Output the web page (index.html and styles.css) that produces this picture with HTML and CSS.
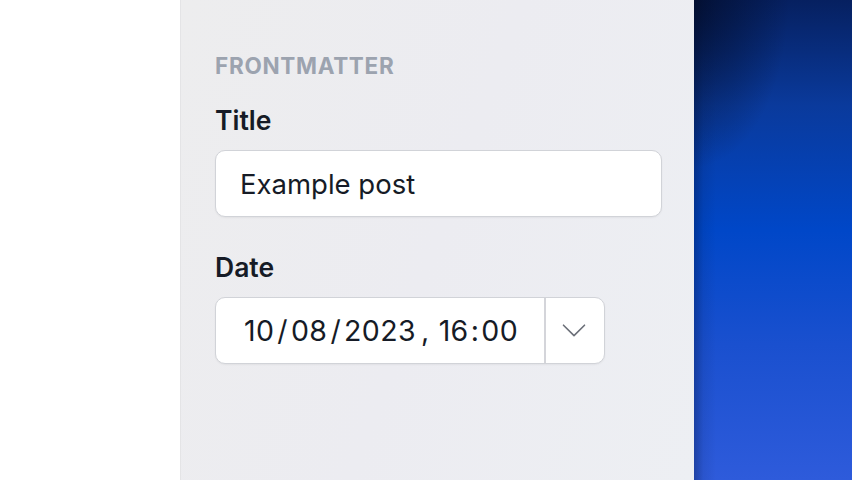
FILE: index.html
```html
<!DOCTYPE html>
<html>
<head>
<meta charset="utf-8">
<link rel="stylesheet" href="styles.css">
</head>
<body>
<div class="app">
  <div class="left"></div>
  <div class="panel">
    <div class="section-title">FRONTMATTER</div>
    <div class="field">
      <label class="label">Title</label>
      <div class="input">Example post</div>
    </div>
    <div class="field">
      <label class="label">Date</label>
      <div class="date">
        <div class="date-value">10<span class="sep">/</span>08<span class="sep">/</span>2023<span class="sep comma">,</span>16<span class="sep colon">:</span>00</div>
        <div class="date-btn">
          <svg width="24" height="13" viewBox="0 0 24 13"><path d="M1.5 1.2 L12 11.6 L22.5 1.2" fill="none" stroke="#6b6f78" stroke-width="1.6" stroke-linecap="round" stroke-linejoin="round"/></svg>
        </div>
      </div>
    </div>
  </div>
  <div class="bg"></div>
</div>
</body>
</html>
```
FILE: styles.css
```css
html, body {
  margin: 0;
  padding: 0;
  height: 100%;
}
body {
  font-family: Inter, "Noto Sans", sans-serif;
  color: #111827;
  background: #fff;
}
.app {
  display: flex;
  height: 480px;
  width: 852px;
  overflow: hidden;
}
.left {
  width: 180px;
  flex: none;
  background: #fff;
}
.panel {
  width: 514px;
  flex: none;
  border-left: 1px solid #e4e4e6;
  background: linear-gradient(110deg, #ededee 0%, #ececf1 50%, #edeff3 100%);
  padding: 52px 32px 0 34px;
  box-sizing: border-box;
}
.section-title {
  font-size: 22.5px;
  font-weight: 700;
  color: #9ca3af;
  letter-spacing: 0.7px;
  line-height: 28px;
}
.field {
  margin-top: 23px;
}
.field + .field {
  margin-top: 33px;
}
.label {
  display: block;
  font-size: 26.5px;
  font-weight: 600;
  line-height: 34px;
  color: #161b26;
}
.input {
  margin-top: 13px;
  height: 67px;
  box-sizing: border-box;
  border: 1.5px solid #d1d3d8;
  border-radius: 10px;
  background: #fff;
  padding: 0 24px;
  display: flex;
  align-items: center;
  font-size: 27.5px;
  color: #161b26;
  box-shadow: 0 1px 2px rgba(0,0,0,0.05);
}
.date {
  margin-top: 13px;
  width: 390px;
  height: 67px;
  box-sizing: border-box;
  border: 1.5px solid #d1d3d8;
  border-radius: 10px;
  background: #fff;
  display: flex;
  box-shadow: 0 1px 2px rgba(0,0,0,0.05);
}
.date-value {
  flex: 1;
  display: flex;
  align-items: center;
  justify-content: center;
  font-size: 28.5px;
  letter-spacing: 0.4px;
  color: #161b26;
  border-right: 2px solid #d4d5da;
  padding-left: 2px;
}
.sep {
  margin: 0 3px;
}
.comma {
  margin: 0 9px 0 5px;
}
.colon {
  margin: 0 2px;
}
.date-btn {
  width: 56px;
  display: flex;
  align-items: center;
  justify-content: center;
  padding-right: 2px;
}
.bg {
  flex: 1;
  background:
    radial-gradient(ellipse 60% 35% at 0% 0%, rgba(2,10,35,0.7) 0%, rgba(2,10,35,0) 100%),
    linear-gradient(90deg, rgba(2,12,40,0.3) 0%, rgba(2,12,40,0.08) 6%, rgba(2,12,40,0) 14%),
    linear-gradient(180deg, #062060 0%, #0a3a9c 22%, #0047c8 48%, #1a50cf 72%, #2e5bdb 100%);
}
```
